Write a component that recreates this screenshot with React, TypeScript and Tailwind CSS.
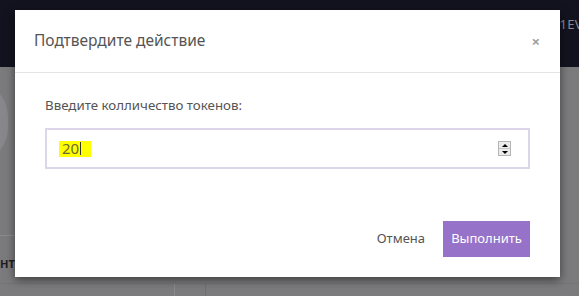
export default function App() {
  return (
    <div className="relative h-[296px] w-[579px] overflow-hidden bg-[#7b7b7d] font-['Noto_Sans',sans-serif]">
      {/* page behind the overlay */}
      <div className="flex h-[67px] items-center justify-end bg-[#13131f]">
        <span className="-mr-1 mb-[18px] text-[13px] tracking-wide text-[#8a8a90]">1EV</span>
      </div>
      <div className="absolute left-[-60px] top-[82px] h-[80px] w-[68px] rounded-full bg-[#88878c]" />
      <div className="absolute left-0 top-[235px] h-px w-[175px] bg-[#8c8c8c]" />
      <div className="absolute left-0 top-[256px] text-[11px] font-bold text-[#1f1f22]">НТ</div>
      <div className="absolute left-0 top-[283px] h-[13px] w-[579px] border-t border-[#747474]">
        <div className="absolute left-[174px] top-0 h-full w-px bg-[#8a8a8a]" />
        <div className="absolute left-[205px] top-0 h-full w-px bg-[#6f6f6f]" />
      </div>

      {/* modal */}
      <div className="absolute left-[15px] top-[10px] flex h-[267px] w-[545px] flex-col bg-white shadow-[0_3px_9px_rgba(0,0,0,0.5)]">
        <div className="flex h-[63px] items-center justify-between border-b border-[#e5e5e5] pl-[19px] pr-[20px]">
          <h4 className="text-[15.5px] text-[#555]">Подтвердите действие</h4>
          <span className="text-[15px] font-bold leading-none text-[#a0a0a0]">×</span>
        </div>
        <div className="flex flex-1 flex-col px-[30px] pt-[24px]">
          <label className="text-[13.3px] leading-4 text-[#555]">Введите колличество токенов:</label>
          <div className="mt-[15px] flex h-[41px] items-center justify-between border-2 border-[#ddd5ea] pl-[12px] pr-[17px]">
            <span className="flex h-4 items-center bg-[#ffff00] pl-[3px] pr-[10px] text-[15px] text-[#6b6b3a]">
              20<span className="ml-px h-[13px] w-px bg-[#333]" />
            </span>
            <div className="flex h-[15px] w-[13px] flex-col border border-[#b5b5b5] bg-[#ececec]">
              <div className="flex flex-1 items-center justify-center border-b border-[#c9c9c9]">
                <div className="h-0 w-0 border-x-[3px] border-b-[3px] border-x-transparent border-b-black" />
              </div>
              <div className="flex flex-1 items-center justify-center">
                <div className="h-0 w-0 border-x-[3px] border-t-[3px] border-x-transparent border-t-black" />
              </div>
            </div>
          </div>
        </div>
        <div className="flex items-center justify-end gap-[18px] pb-[20px] pr-[30px]">
          <button className="text-[13px] text-[#555]">Отмена</button>
          <button className="h-[36px] w-[87px] bg-[#9672c8] text-[13px] text-white">Выполнить</button>
        </div>
      </div>
    </div>
  );
}
